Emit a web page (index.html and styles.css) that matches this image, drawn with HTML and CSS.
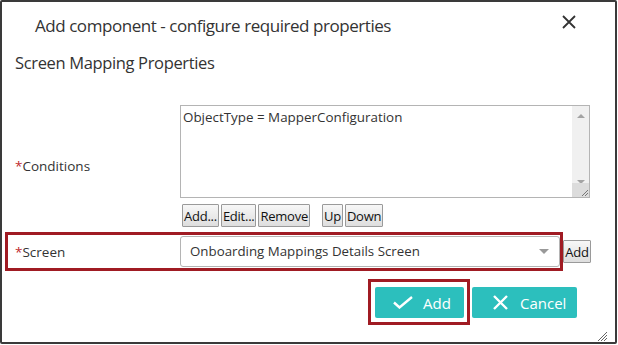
FILE: index.html
```html
<!DOCTYPE html>
<html lang="en">
<head>
    <meta charset="UTF-8">
    <title>Add component</title>
    <link rel="stylesheet" href="styles.css">
</head>
<body>
    <div class="dialog">
        <div class="dialog-header">
            <h1 class="dialog-title">Add component - configure required properties</h1>
            <button class="close-btn" title="Close">
                <svg width="14" height="14" viewBox="0 0 14 14"><path d="M1 1L13 13M13 1L1 13" stroke="#333" stroke-width="1.8" fill="none"/></svg>
            </button>
        </div>
        <h2 class="section-title">Screen Mapping Properties</h2>

        <div class="form">
            <div class="conditions-row">
                <label class="field-label"><span class="req">*</span>Conditions</label>
                <div class="field">
                    <div class="textarea">
                        <div class="textarea-text">ObjectType = MapperConfiguration</div>
                        <div class="scrollbar">
                            <span class="arrow-up"></span>
                            <span class="arrow-down"></span>
                            <span class="scroll-corner">
                                <svg width="10" height="10" viewBox="0 0 10 10"><path d="M9 3L3 9M9 6L6 9" stroke="#777" stroke-width="1" fill="none"/></svg>
                            </span>
                        </div>
                    </div>
                    <div class="list-buttons">
                        <button class="mini-btn">Add...</button>
                        <button class="mini-btn">Edit...</button>
                        <button class="mini-btn">Remove</button>
                        <button class="mini-btn spaced">Up</button>
                        <button class="mini-btn">Down</button>
                    </div>
                </div>
            </div>

            <div class="screen-row">
                <div class="highlight screen-box">
                    <label class="field-label screen-label"><span class="req">*</span>Screen</label>
                    <div class="select">
                        <span>Onboarding Mappings Details Screen</span>
                        <span class="caret"></span>
                    </div>
                </div>
                <button class="mini-btn">Add</button>
            </div>
        </div>

        <div class="actions">
            <div class="highlight add-wrap">
                <button class="action-btn add-btn">
                    <svg width="20" height="13" viewBox="0 0 20 13"><path d="M1 6.5L6.5 11.5L19 1" stroke="#fff" stroke-width="2.4" fill="none"/></svg>
                    Add
                </button>
            </div>
            <button class="action-btn cancel-btn">
                <svg width="15" height="15" viewBox="0 0 15 15"><path d="M1 1L14 14M14 1L1 14" stroke="#fff" stroke-width="2.4" fill="none"/></svg>
                Cancel
            </button>
        </div>

        <span class="resize-grip">
            <svg width="11" height="11" viewBox="0 0 11 11"><path d="M10 1L1 10M10 4L4 10M10 7L7 10" stroke="#666" stroke-width="1" fill="none"/></svg>
        </span>
    </div>
</body>
</html>
```

FILE: styles.css
```css
body {
    margin: 0;
    font-family: "Open Sans", "Noto Sans", sans-serif;
    color: #333;
    background: #fff;
}

.dialog {
    position: relative;
    box-sizing: border-box;
    width: 617px;
    height: 344px;
    border: 2px solid #3a3a3a;
    border-radius: 2px;
    background: #fff;
}

.dialog-header {
    display: flex;
    justify-content: space-between;
    align-items: flex-start;
    padding: 11px 39px 0 33px;
}

.dialog-title {
    margin: 0;
    font-size: 17px;
    font-weight: normal;
    line-height: 26px;
    letter-spacing: -0.45px;
}

.close-btn {
    margin-top: 2px;
    padding: 0;
    border: none;
    background: none;
    width: 14px;
    height: 14px;
}

.section-title {
    margin: 12px 0 0 13px;
    font-size: 16.5px;
    font-weight: normal;
    line-height: 24px;
    letter-spacing: -0.35px;
}

.form {
    margin-top: 30px;
}

.conditions-row {
    display: flex;
    align-items: center;
}

.field-label {
    box-sizing: border-box;
    width: 178px;
    padding-left: 13px;
    font-size: 13.5px;
}

.screen-label {
    width: 172px;
    padding-left: 7px;
}

.req {
    color: #c0282d;
}

.textarea {
    display: flex;
    box-sizing: border-box;
    width: 410px;
    height: 93px;
    border: 1px solid #b4b4b4;
}

.textarea-text {
    flex: 1;
    padding: 2px 2px;
    font-size: 13.4px;
    line-height: 18px;
}

.scrollbar {
    position: relative;
    width: 17px;
    background: #f0f0f0;
}

.arrow-up,
.arrow-down {
    position: absolute;
    left: 5px;
    width: 0;
    height: 0;
    border-left: 4px solid transparent;
    border-right: 4px solid transparent;
}

.arrow-up {
    top: 8px;
    border-bottom: 4px solid #a3a3a3;
}

.arrow-down {
    top: 74px;
    border-top: 4px solid #a3a3a3;
}

.scroll-corner {
    position: absolute;
    left: 0;
    bottom: 0;
    width: 17px;
    height: 14px;
    background: #dcdcdc;
    display: flex;
    align-items: flex-end;
    justify-content: flex-end;
}

.list-buttons {
    display: flex;
    gap: 2px;
    margin-top: 6px;
    padding-left: 2px;
}

.mini-btn {
    height: 23px;
    padding: 0 1px;
    border: 1px solid #9a9a9a;
    border-radius: 1px;
    background: linear-gradient(#f7f7f7, #dedede);
    font-family: "Open Sans", "Noto Sans", sans-serif;
    font-size: 13px;
    letter-spacing: -0.25px;
    color: #111;
    line-height: 20px;
}

.mini-btn.spaced {
    margin-left: 10px;
}

.screen-row {
    display: flex;
    align-items: center;
    margin-top: 5px;
}

.highlight {
    border: 3px solid #a01b23;
}

.screen-box {
    display: flex;
    align-items: center;
    box-sizing: border-box;
    width: 558px;
    height: 39px;
    margin-left: 3px;
}

.select {
    display: flex;
    align-items: center;
    justify-content: space-between;
    box-sizing: border-box;
    width: 380px;
    height: 31px;
    margin-bottom: 1px;
    padding: 0 10px 0 9px;
    border: 1px solid #b4b4b4;
    border-radius: 3px;
    font-size: 13.3px;
}

.caret {
    width: 0;
    height: 0;
    border-left: 5px solid transparent;
    border-right: 5px solid transparent;
    border-top: 5px solid #999;
}

.screen-row .mini-btn {
    width: 28px;
    padding: 0;
}

.actions {
    display: flex;
    justify-content: flex-end;
    align-items: flex-start;
    gap: 2px;
    margin-top: 8px;
    padding-right: 38px;
}

.add-wrap {
    padding: 5px 3px 4px 4px;
}

.action-btn {
    display: flex;
    align-items: center;
    height: 31px;
    border: none;
    border-radius: 2px;
    background: #2cbfbd;
    color: #fff;
    font-family: "Open Sans", "Noto Sans", sans-serif;
    font-size: 15px;
}

.add-btn {
    width: 89px;
    gap: 10px;
    padding: 0 0 0 18px;
}

.cancel-btn {
    width: 105px;
    gap: 12px;
    margin-top: 8px;
    padding: 0 0 0 21px;
}

.resize-grip {
    position: absolute;
    right: 7px;
    bottom: 6px;
    width: 11px;
    height: 11px;
}
```
